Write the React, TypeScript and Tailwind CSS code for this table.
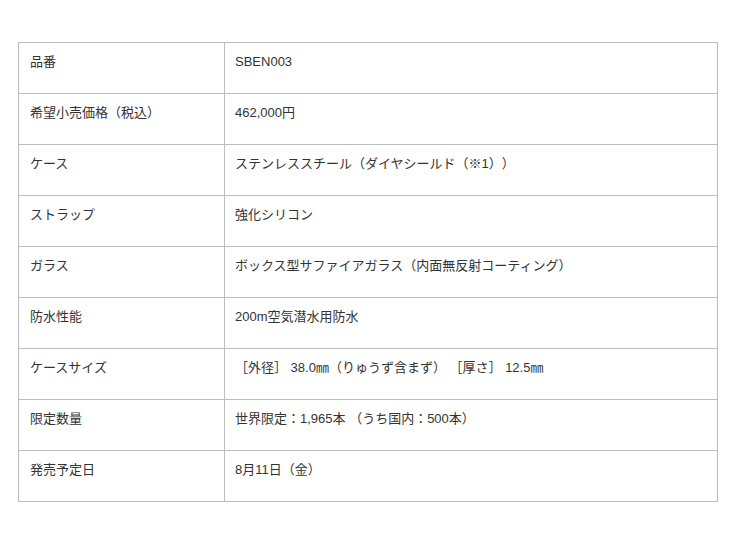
const ROWS: { label: string; value: string }[] = [
  { label: "品番", value: "SBEN003" },
  { label: "希望小売価格（税込）", value: "462,000円" },
  { label: "ケース", value: "ステンレススチール（ダイヤシールド（※1））" },
  { label: "ストラップ", value: "強化シリコン" },
  { label: "ガラス", value: "ボックス型サファイアガラス（内面無反射コーティング）" },
  { label: "防水性能", value: "200m空気潜水用防水" },
  { label: "ケースサイズ", value: "［外径］ 38.0㎜（りゅうず含まず） ［厚さ］ 12.5㎜" },
  { label: "限定数量", value: "世界限定：1,965本 （うち国内：500本）" },
  { label: "発売予定日", value: "8月11日（金）" },
];

export default function App() {
  return (
    <div
      className="min-h-[542px] bg-white pt-[42px] pl-[18px] text-[#333] text-[13px] leading-[18px] [text-spacing-trim:space-all]"
      style={{ fontFamily: '"Liberation Sans", "Noto Sans CJK JP", sans-serif' }}
    >
      <table className="w-[700px] border-collapse table-fixed">
        <colgroup>
          <col className="w-[206px]" />
          <col />
        </colgroup>
        <tbody>
          {ROWS.map((r) => (
            <tr key={r.label}>
              <td className="h-[51px] border border-[#bdbdbd] align-top px-[11px] pt-[10px]">{r.label}</td>
              <td className="h-[51px] border border-[#bdbdbd] align-top px-[10px] pt-[10px]">{r.value}</td>
            </tr>
          ))}
        </tbody>
      </table>
    </div>
  );
}
